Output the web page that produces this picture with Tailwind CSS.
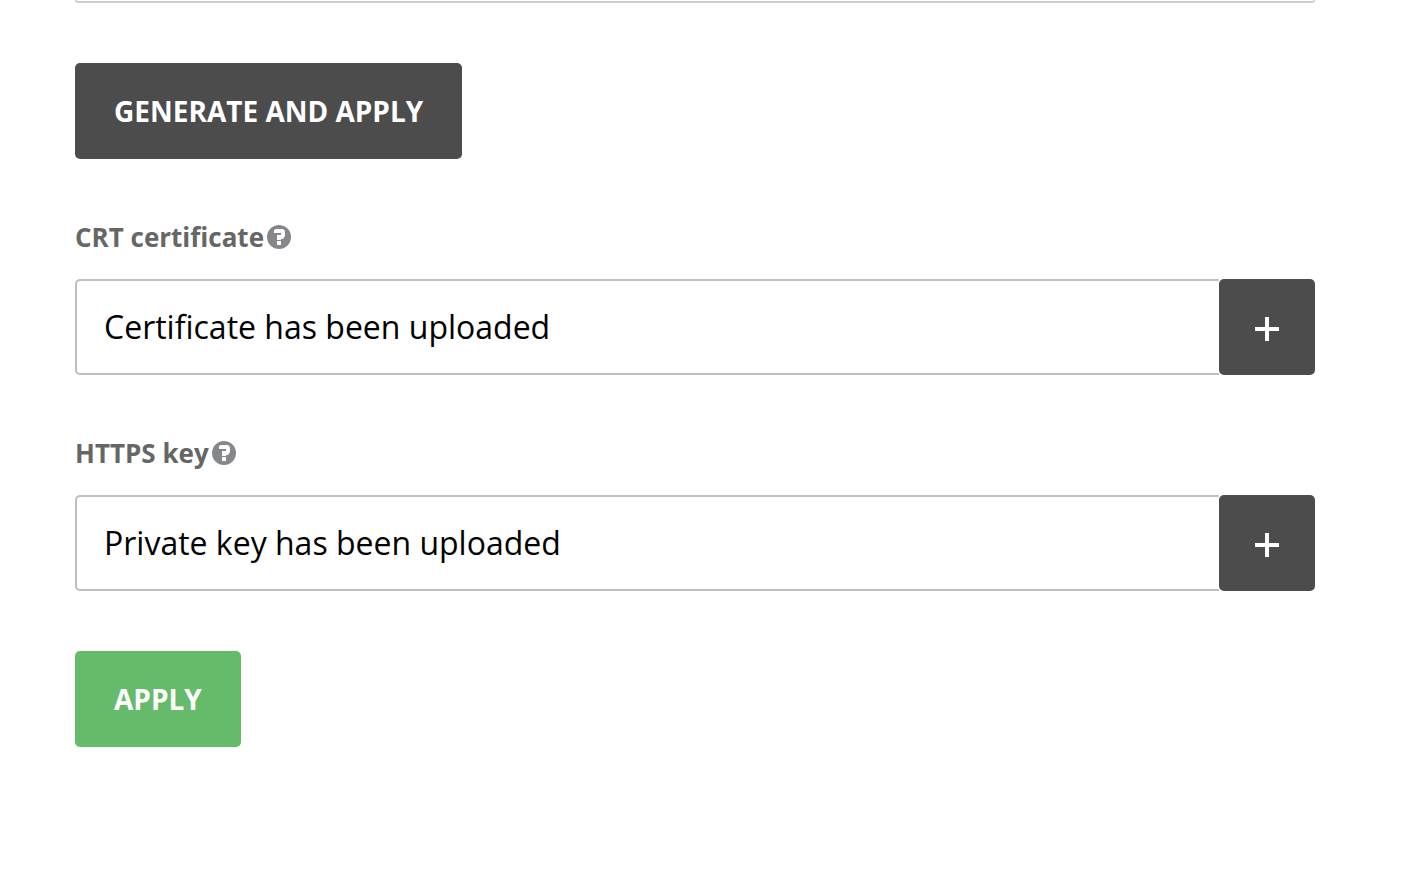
<!DOCTYPE html>
<html lang="en">
<head>
  <meta charset="utf-8" />
  <meta name="viewport" content="width=device-width, initial-scale=1" />
  <title>HTTPS certificate</title>
  <script src="https://cdn.jsdelivr.net/npm/@tailwindcss/browser@4"></script>
</head>
<body class="bg-white font-['Open_Sans',sans-serif]">
  <main class="flex flex-col items-start pl-[75px] pr-[86px]">
    <!-- bottom edge of the previous field -->
    <div class="h-[3px] w-full rounded-b-md border-x-2 border-b-2 border-[#cfcfcf]"></div>
    <button type="button" class="mt-[60px] h-24 rounded-[5px] bg-[#4c4c4c] px-[39px] text-[28px] font-bold text-white">GENERATE AND APPLY</button>

    <form class="flex w-full flex-col items-start">
      <div class="mt-[60px] w-full">
        <div class="flex h-9 items-center gap-[3px] text-[26px] font-bold text-[#666666]">
          <label for="crt">CRT certificate</label>
          <svg class="size-6" viewBox="0 0 24 24" aria-hidden="true">
            <circle cx="12" cy="12" r="12" fill="#85878b" />
            <path d="M7 5l2-1h7l2 2v5l-2 3h-2v1h-4v-5h4V8H7zM10 16h4v4h-4z" fill="#fff" />
          </svg>
        </div>
        <div class="mt-6 flex h-24">
          <input id="crt" type="text" readonly value="Certificate has been uploaded" class="min-w-0 flex-1 rounded-l-[5px] border-2 border-r-0 border-[#bfbfbf] px-[27px] text-[32px] text-black outline-none" />
          <button type="button" aria-label="Upload certificate" class="flex w-24 items-center justify-center rounded-[5px] bg-[#4c4c4c] pt-1">
            <svg class="size-6" viewBox="0 0 24 24"><path d="M12 0v24M0 12h24" stroke="#fff" stroke-width="4" /></svg>
          </button>
        </div>
      </div>

      <div class="mt-[60px] w-full">
        <div class="flex h-9 items-center gap-[3px] text-[26px] font-bold text-[#666666]">
          <label for="key">HTTPS key</label>
          <svg class="size-6" viewBox="0 0 24 24" aria-hidden="true">
            <circle cx="12" cy="12" r="12" fill="#85878b" />
            <path d="M7 5l2-1h7l2 2v5l-2 3h-2v1h-4v-5h4V8H7zM10 16h4v4h-4z" fill="#fff" />
          </svg>
        </div>
        <div class="mt-6 flex h-24">
          <input id="key" type="text" readonly value="Private key has been uploaded" class="min-w-0 flex-1 rounded-l-[5px] border-2 border-r-0 border-[#bfbfbf] px-[27px] text-[32px] text-black outline-none" />
          <button type="button" aria-label="Upload private key" class="flex w-24 items-center justify-center rounded-[5px] bg-[#4c4c4c] pt-1">
            <svg class="size-6" viewBox="0 0 24 24"><path d="M12 0v24M0 12h24" stroke="#fff" stroke-width="4" /></svg>
          </button>
        </div>
      </div>

      <button type="submit" class="mt-[60px] h-24 rounded-[5px] bg-[#66bb6a] px-[39px] text-[28px] font-bold text-white">APPLY</button>
    </form>
  </main>
</body>
</html>
